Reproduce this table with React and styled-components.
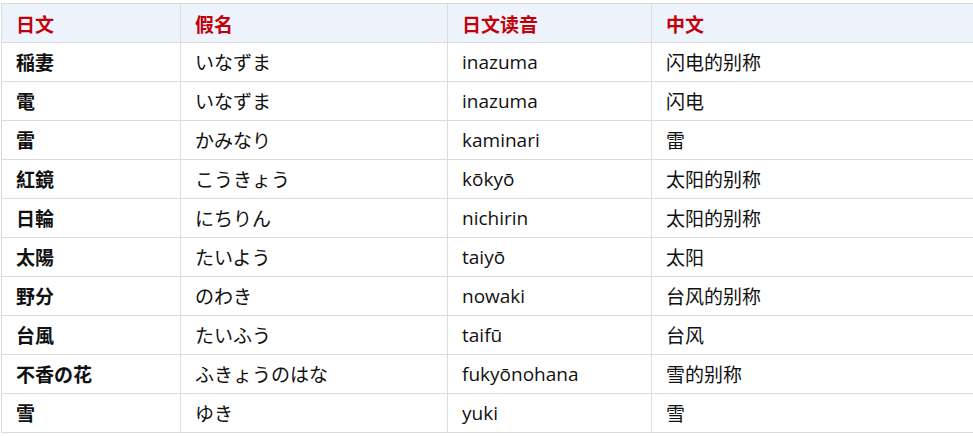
import styled, { createGlobalStyle } from "styled-components";

const GlobalStyle = createGlobalStyle`
  html, body {
    margin: 0;
    padding: 0;
    background: #ffffff;
    overflow: hidden;
  }
`;

const ROWS = [
  ["稲妻", "いなずま", "inazuma", "闪电的别称"],
  ["電", "いなずま", "inazuma", "闪电"],
  ["雷", "かみなり", "kaminari", "雷"],
  ["紅鏡", "こうきょう", "kōkyō", "太阳的别称"],
  ["日輪", "にちりん", "nichirin", "太阳的别称"],
  ["太陽", "たいよう", "taiyō", "太阳"],
  ["野分", "のわき", "nowaki", "台风的别称"],
  ["台風", "たいふう", "taifū", "台风"],
  ["不香の花", "ふきょうのはな", "fukyōnohana", "雪的别称"],
  ["雪", "ゆき", "yuki", "雪"],
];

const HEADERS = ["日文", "假名", "日文读音", "中文"];

const Wrapper = styled.div`
  padding: 3px 0 0 1px;
`;

const Table = styled.table`
  border-collapse: collapse;
  width: 974px;
  table-layout: fixed;
  font-family: "Open Sans", "Noto Sans CJK SC", sans-serif;
  font-size: 19px;
  color: #111111;
`;

const Th = styled.th`
  height: 38px;
  padding: 0 14px;
  text-align: left;
  font-weight: 700;
  color: #c4000a;
  background: #ecf3fa;
  border: 1px solid #dcdcdc;
  font-family: "Noto Sans CJK SC", sans-serif;
`;

const Td = styled.td`
  height: 38px;
  padding: 0 14px;
  border: 1px solid #dcdcdc;
  font-weight: ${(p) => (p.$bold ? 700 : 400)};
  white-space: nowrap;
`;

const WIDTHS = [179, 267, 204, 324];

export default function App() {
  return (
    <>
      <GlobalStyle />
      <Wrapper>
        <Table>
          <colgroup>
            {WIDTHS.map((w, i) => (
              <col key={i} style={{ width: w }} />
            ))}
          </colgroup>
          <thead>
            <tr>
              {HEADERS.map((h) => (
                <Th key={h}>{h}</Th>
              ))}
            </tr>
          </thead>
          <tbody>
            {ROWS.map((row, i) => (
              <tr key={i}>
                {row.map((cell, j) => (
                  <Td key={j} $bold={j === 0}>
                    {cell}
                  </Td>
                ))}
              </tr>
            ))}
          </tbody>
        </Table>
      </Wrapper>
    </>
  );
}
